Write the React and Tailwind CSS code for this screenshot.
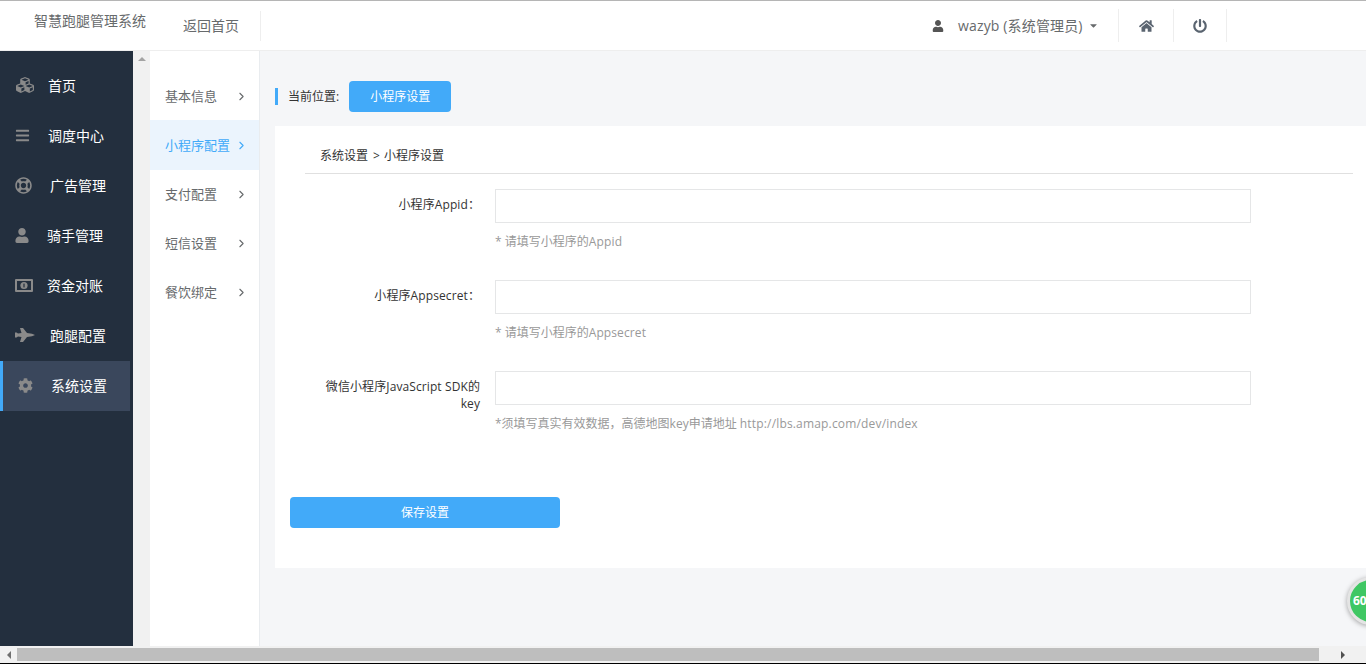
import { FaCubes, FaBars, FaRegLifeRing, FaUser, FaCog, FaHome, FaPowerOff, FaCaretDown } from 'react-icons/fa'
import { LuChevronRight } from 'react-icons/lu'

const fontStack = "font-['Open_Sans','Noto_Sans_CJK_SC',sans-serif]"

function MoneyIcon({ className }) {
  return (
    <svg viewBox="0 0 18 13" className={className}>
      <rect width="18" height="13" rx="1" fill="#8a8a8a" />
      <rect x="2" y="2" width="14" height="9" fill="#232f3e" />
      <circle cx="9" cy="6.5" r="3.6" fill="#8a8a8a" />
      <rect x="8.4" y="4.6" width="1.2" height="3.8" fill="#232f3e" />
    </svg>
  )
}

function JetIcon({ className }) {
  return (
    <svg viewBox="0 0 20 14" className={className}>
      <path d="M5 0h3l4 5 5 .8 3 1.2-3 1.2-5 .8-4 5H5l1.500-5L3 8.500 1.500 9.500H0V4.500h1.500L3 5.500 6.500 5z" fill="#8a8a8a" />
    </svg>
  )
}

const sideMenu = [
  { label: '首页', icon: FaCubes, iconClass: 'w-[20px] h-[18px]', textClass: 'ml-[13px]' },
  { label: '调度中心', icon: FaBars, iconClass: 'w-[15px] h-[15px]', textClass: 'ml-[18px]' },
  { label: '广告管理', icon: FaRegLifeRing, iconClass: 'w-[17px] h-[17px]', textClass: 'ml-[18px]' },
  { label: '骑手管理', icon: FaUser, iconClass: 'w-[14px] h-[15px]', textClass: 'ml-[18px]' },
  { label: '资金对账', icon: MoneyIcon, iconClass: 'w-[18px] h-[13px]', textClass: 'ml-[14px]' },
  { label: '跑腿配置', icon: JetIcon, iconClass: 'w-[20px] h-[14px]', textClass: 'ml-[15px]' },
  { label: '系统设置', icon: FaCog, iconClass: 'w-[15px] h-[15px]', textClass: 'ml-[18px]', active: true },
]

const subMenu = [
  { label: '基本信息' },
  { label: '小程序配置', active: true },
  { label: '支付配置' },
  { label: '短信设置' },
  { label: '餐饮绑定' },
]

function SideItem({ item }) {
  const Icon = item.icon
  return (
    <div className={`flex items-center h-[50px] pb-[2px] ${item.active ? 'w-[130px] bg-[#3a475c] border-l-[3px] border-[#42aaf9] pl-[15px]' : 'pl-[15px]'}`}>
      <Icon className={`${item.iconClass} text-[#8a8a8a] shrink-0`} />
      <span className={`${item.textClass} text-[14px] text-white`}>{item.label}</span>
    </div>
  )
}

function FormRow({ label, hint, rowClass }) {
  return (
    <div className={`flex ${rowClass}`}>
      <div className="w-[175px] pl-[15px] pt-[7px] text-right text-[12px] leading-[17px] tracking-[0.1px] text-[#333] shrink-0">{label}</div>
      <div className="ml-[15px] w-[756px]">
        <input className="block w-full h-[34px] bg-white border border-[#e5e6e7] outline-none" />
        <p className="mt-[10px] text-[12px] leading-[18px] text-[#999]">{hint}</p>
      </div>
    </div>
  )
}

export default function App() {
  return (
    <div className={`w-[1366px] h-[664px] overflow-hidden relative flex flex-col bg-[#f5f6f8] ${fontStack}`}>
      <header className="h-[51px] shrink-0 bg-white border-t border-[#b5b5b5] border-b-[1px] border-b-[#eeeeee] flex">
        <div className="w-[183px] shrink-0 pl-[34px] pt-[11px] text-[14px] leading-[18px] text-[#676a6c]">智慧跑腿管理系统</div>
        <div className="h-[30px] mt-[10px] w-[78px] border-r border-[#eeeeee] pt-[5px] text-[14px] leading-[20px] text-[#676a6c]">返回首页</div>
        <div className="ml-auto flex items-start mr-[139px] mt-[8px]">
          <div className="flex items-center h-[33px] w-[187px] pl-[1px]">
            <FaUser className="w-[12px] h-[12px] text-[#555]" />
            <span className="ml-[14px] text-[14px] tracking-[0.15px] text-[#676a6c]">wazyb (系统管理员)</span>
            <FaCaretDown className="ml-[5px] w-[11px] h-[11px] text-[#676a6c]" />
          </div>
          <div className="w-[55px] h-[33px] border-l border-[#eeeeee] flex items-center justify-center">
            <FaHome className="w-[15px] h-[14px] text-[#5a6470]" />
          </div>
          <div className="w-[54px] h-[33px] border-x border-[#eeeeee] flex items-center justify-center">
            <FaPowerOff className="w-[14px] h-[14px] text-[#5a6470]" />
          </div>
        </div>
      </header>

      <div className="flex-1 flex min-h-0">
        <aside className="w-[133px] shrink-0 bg-[#232f3e] pt-[10px]">
          {sideMenu.map((item) => (
            <SideItem key={item.label} item={item} />
          ))}
        </aside>
        <div className="w-[17px] shrink-0 bg-[#f1f1f1] pt-[6px] flex justify-center">
          <div className="w-0 h-0 border-x-[4px] border-x-transparent border-b-[4px] border-b-[#a3a3a3]" />
        </div>
        <nav className="w-[110px] shrink-0 bg-white border-r border-[#e9ecef] pt-[21px]">
          {subMenu.map((item) => (
            <div
              key={item.label}
              className={`flex items-center h-[49px] pl-[15px] text-[13px] ${item.active ? 'bg-[#ebf4fd] shadow-[0_-1px_0_#ebf4fd] text-[#42aaf9]' : 'text-[#676a6c]'}`}
            >
              <span className="w-[72px]">{item.label}</span>
              <LuChevronRight className={`ml-[-2px] w-[13px] h-[13px] ${item.active ? 'text-[#42aaf9]' : 'text-[#676a6c]'}`} />
            </div>
          ))}
        </nav>

        <main className="flex-1 min-w-0 pl-[15px] pt-[30px]">
          <div className="flex items-center h-[31px]">
            <div className="w-[3px] h-[17px] bg-[#42aaf9]" />
            <span className="ml-[10px] text-[12px] text-[#333]">当前位置:</span>
            <button className="ml-[10px] w-[102px] h-[31px] rounded-[4px] bg-[#42aaf9] text-white text-[12px]">小程序设置</button>
          </div>
          <section className="mt-[14px] h-[442px] bg-white pl-[30px] pr-[13px]">
            <div className="h-[48px] pl-[15px] pt-[21px] border-b border-[#e0e0e0] text-[12px] leading-[18px] text-[#333]">
              系统设置<span className="ml-[5px] mr-[4px]">&gt;</span>小程序设置
            </div>
            <FormRow rowClass="mt-[15px]" label="小程序Appid：" hint={<>* 请填写小程序的<span className="tracking-[0.2px]">Appid</span></>} />
            <FormRow rowClass="mt-[29px]" label="小程序Appsecret：" hint={<>* 请填写小程序的<span className="tracking-[0.1px]">Appsecret</span></>} />
            <FormRow
              rowClass="mt-[29px]"
              label="微信小程序JavaScript SDK的key"
              hint={<>*须填写真实有效数据，高德地图key申请地址 <span className="tracking-[0.17px]">http://lbs.amap.com/dev/index</span></>}
            />
            <button className="mt-[64px] ml-[-15px] w-[270px] h-[31px] rounded-[4px] bg-[#42aaf9] text-white text-[12px]">保存设置</button>
          </section>
        </main>
      </div>

      <div className="h-[17px] shrink-0 bg-[#f1f1f1] flex items-center">
        <div className="w-[17px] flex justify-center">
          <div className="w-0 h-0 border-y-[4px] border-y-transparent border-r-[4px] border-r-[#707070]" />
        </div>
        <div className="w-[1302px] h-[13px] bg-[#bebebe]" />
        <div className="flex-1 flex justify-center">
          <div className="w-0 h-0 border-y-[4px] border-y-transparent border-l-[4px] border-l-[#505050]" />
        </div>
      </div>
      <div className="h-[1px] shrink-0 bg-black" />

      <div className="absolute left-[1347px] top-[577px] w-[48px] h-[48px] rounded-full bg-[#3fc763] border-[3px] border-[#e4e4e4] shadow-[0_1px_5px_rgba(0,0,0,0.35)] pl-[3px] flex items-center">
        <span className="text-[12px] font-bold text-white">60</span>
      </div>
    </div>
  )
}
